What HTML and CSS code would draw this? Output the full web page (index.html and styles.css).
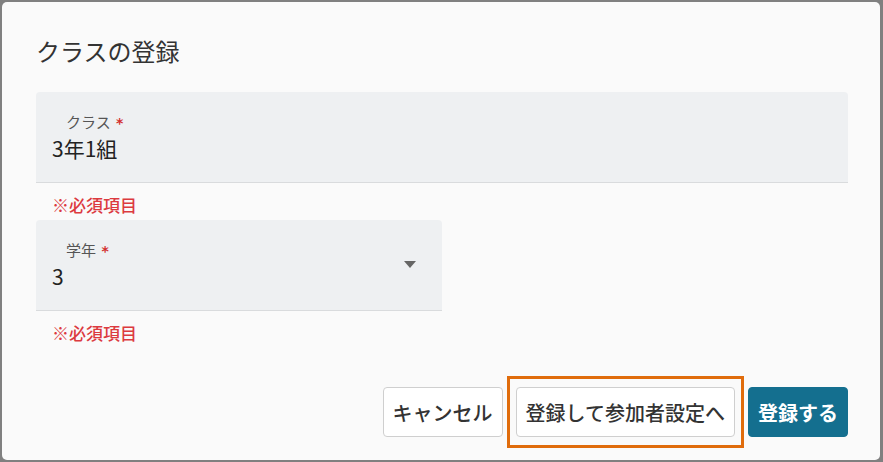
FILE: index.html
```html
<!DOCTYPE html>
<html lang="ja">
<head>
<meta charset="utf-8">
<title>クラスの登録</title>
<link rel="stylesheet" href="styles.css">
</head>
<body>
<div class="dialog">
  <h1 class="title">クラスの登録</h1>
  <div class="field field-wide">
    <div class="field-body">
      <div class="label">クラス <span class="req">*</span></div>
      <div class="value">3年1組</div>
    </div>
  </div>
  <div class="error">※必須項目</div>
  <div class="field field-narrow">
    <div class="field-body">
      <div class="label">学年 <span class="req">*</span></div>
      <div class="value">3</div>
    </div>
    <svg class="arrow" width="12" height="7" viewBox="0 0 12 7"><path d="M0 0H12L6 7Z" fill="#666"/></svg>
  </div>
  <div class="error">※必須項目</div>
  <div class="actions">
    <button class="btn">キャンセル</button>
    <span class="highlight"><button class="btn">登録して参加者設定へ</button></span>
    <button class="btn btn-primary">登録する</button>
  </div>
</div>
</body>
</html>
```
FILE: styles.css
```css
html, body {
  margin: 0;
  padding: 0;
}
body {
  background: #808080;
  width: 883px;
  height: 462px;
  overflow: hidden;
  font-family: "Noto Sans CJK JP", "Noto Sans", sans-serif;
}
.dialog {
  box-sizing: border-box;
  margin: 2px 3px 0 2px;
  height: 458px;
  background: #fafafa;
  border-radius: 5px;
  padding: 31px 32px 12px 34px;
  display: flex;
  flex-direction: column;
}
.title {
  margin: 0 0 23px 0;
  font-size: 24px;
  line-height: 36px;
  font-weight: 400;
  color: #333;
}
.field {
  box-sizing: border-box;
  background: #eef0f2;
  border-bottom: 1px solid #d9dbdd;
  border-radius: 4px 4px 0 0;
  display: flex;
  align-items: flex-start;
  height: 91px;
}
.field-wide {
  width: 812px;
}
.field-narrow {
  width: 406px;
}
.field-body {
  flex: 1;
  padding-top: 20px;
}
.label {
  font-size: 15px;
  line-height: 20px;
  color: #555;
  padding-left: 30px;
}
.req {
  color: #d32f2f;
  font-family: "DejaVu Sans", sans-serif;
  font-weight: 700;
  font-size: 14px;
  margin-left: 2px;
}
.value {
  font-size: 21px;
  line-height: 28px;
  color: #222;
  padding-left: 16px;
  margin-top: 1px;
}
.arrow {
  align-self: center;
  margin-right: 26px;
  margin-top: -2px;
}
.error {
  color: #dc3a3f;
  font-size: 17px;
  line-height: 22px;
  font-weight: 500;
  padding-left: 16px;
  margin: 11px 0 4px 0;
}
.actions {
  margin-top: auto;
  display: flex;
  justify-content: flex-end;
  align-items: center;
  gap: 4px;
}
.btn {
  box-sizing: border-box;
  height: 50px;
  padding: 0 9px;
  background: #fff;
  border: 1px solid #cfcfcf;
  border-radius: 4px;
  font-family: "Noto Sans CJK JP", "Noto Sans", sans-serif;
  font-size: 20px;
  font-weight: 500;
  color: #333;
}
.highlight {
  display: flex;
  border: 3px solid #e06c0c;
  padding: 8px 6px;
}
.btn-primary {
  background: #146f8f;
  border-color: #146f8f;
  color: #fff;
  font-weight: 700;
  padding: 0 9px;
}
```
